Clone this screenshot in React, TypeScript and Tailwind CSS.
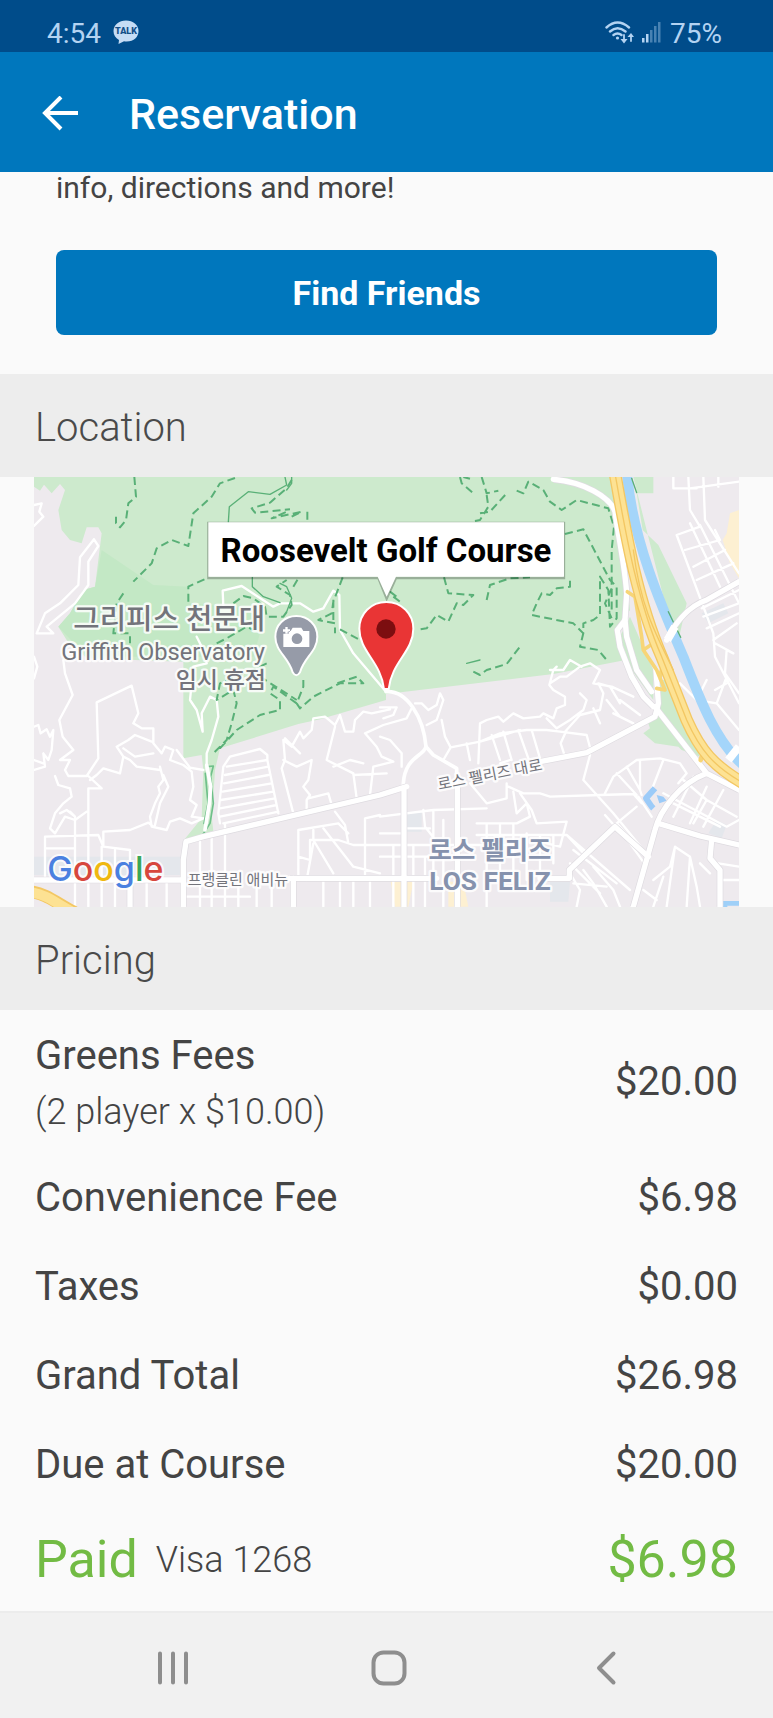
import React from "react";

const PARK =
  "M42 21H1790L1800 120L1830 420L1790 480L1812 580L1805 572L1600 612L1098 672L1098 690L900 748L835 762L600 835L585 900L580 980L575 1040L580 1082L490 1112L545 1045L550 900L545 855L490 865V575L200 565L140 510L115 470L150 430L190 360L225 350L240 230L245 190L235 172H200L185 220L150 210L125 180L115 120L135 60L120 42L95 70L72 44L60 62L42 50Z";

// Residential streets, thin white lines.
const STREETS = [
  // west hills
  "M42 105L65 100L58 125L70 140L42 168",
  "M222 208L180 262L175 345L120 400L75 430L50 490L100 490L80 470L165 400L205 345L205 275L235 228L222 208",
  "M42 560L52 590L42 625M130 570L135 610L158 675L118 750L128 800L160 840L120 870L150 870L135 900L145 918H200L235 865L230 697L335 647L355 730L340 760L365 775H400V820L425 850",
  "M42 770L55 765L62 790L80 778L90 800L100 780L95 840L85 870L70 850L75 890L42 900M42 870L70 880",
  "M205 918L245 955H205V1090M210 930L230 915L250 895L300 910L310 860L290 830L325 810L345 795L395 815M310 835L345 860L400 850M310 860L330 870L350 890L420 900",
  "M425 850L435 830L460 840L450 870L490 885L515 905L520 950L510 990L530 1005L515 1040L550 1045M550 900L510 893L470 840",
  "M420 890L430 930L415 950L420 970L405 1000L390 1040L395 1070L440 1080L450 1055L480 1045L515 1060L550 1045M430 915L445 950L420 1000L405 1065",
  "M105 918L115 945L150 955L155 980L130 1000L105 1030L90 1075L105 1090L135 1040L165 1050L200 1025M120 1030L140 1020L165 1040L150 1025",
  "M75 1230V1100L235 1095L250 1130L330 1140V1230M75 1135H165M165 1045V1310M205 1095V1310M245 1130V1310M285 1140V1310M250 1130V1085L330 1080L385 1058L400 1070",
  // the observatory road
  "M610 410L608 362L665 348L760 410L780 400H840L880 425L910 415L940 362L958 375L960 480L1000 550L1098 665",
  "M530 500L550 540L560 580L520 590L510 690L530 720L548 785L545 730L570 680L590 690L595 740L575 810L560 850L560 900",
  // terraced blocks
  "M600 1060L595 1030L610 890L630 860L720 837L742 855V870L775 1030M742 870L620 890M615 915L745 890M612 940L745 915M608 965L755 940M603 990L760 965M600 1015L765 985M600 1040L770 1005M610 1060L775 1025",
  "M540 1115V1310M575 1105V1310M615 1060V1310M500 1280H690M655 1235V1310M710 1235V1310M755 1235V1310M380 1235V1310M440 1235V1310",
  "M820 1030L785 895L795 870L790 810L815 830L840 785L850 805L875 780L880 745L915 740L945 765L960 735L975 785H1000L1005 750L1030 725L1055 730L1110 718",
  "M790 870L830 890L875 870L865 930L850 950L870 975L860 990V1020M865 985L925 970L935 1005M795 805L840 850",
  "M945 770L920 870L1000 910L1010 985M940 890L990 870L1030 880M1035 790L1070 830L1085 860L1120 875L1060 890L1050 975M1035 790L1090 765L1160 745L1175 715M1000 915L1100 910",
  "M945 1025L975 1065L985 1120M835 1230V1080L955 1060L985 1090M835 1160L870 1170V1110L955 1110L1000 1125H1080M880 1080V1110L940 1210M910 1075L1000 1190L1080 1210M1035 1230V1045L1080 1035M880 1120L860 1230M1000 1235V1310M1050 1235V1310M910 1235V1310M960 1235V1310",
  "M1080 1090H1150M1080 1125H1490M1080 1160H1240M1080 1040L1240 1020L1400 1015M1240 1020V1230M1210 1020L1215 1070L1270 1140M1160 1075H1230M1215 1160V1310M1270 1050V1310M1180 1125V1310M1120 1125V1310",
  // los feliz hills
  "M1080 712H1130L1120 735L1090 745M1185 700L1205 700L1225 720L1250 705L1260 670L1270 690L1250 750L1220 765M1265 750L1275 800L1292 832L1270 870M1292 832L1380 815L1500 780",
  "M1080 800L1110 810L1145 850V890M1375 880L1380 760L1400 750L1435 740L1450 755L1480 730L1510 745L1560 740L1570 730L1600 745L1610 715L1635 705V680L1600 660L1588 645L1600 600L1610 590M1580 745L1610 775L1650 750L1690 720L1700 690L1680 670",
  "M1380 815L1440 790L1520 780H1580L1620 785L1700 795L1712 840L1690 850M1415 795L1440 870M1450 785L1475 870M1495 780L1525 865M1535 780L1560 865M1340 820L1350 870M1440 880L1470 870",
  "M1640 780L1622 820L1635 860L1690 850M1710 855L1690 930L1780 1030L1870 1140M1635 785L1680 735L1740 720L1750 670L1735 640L1770 650L1800 700M1720 715L1740 760M1760 690L1800 740M1800 690L1860 735M1780 730L1840 760",
  "M1590 640L1620 620H1640L1680 590L1710 580L1740 600L1720 640L1775 650L1840 680M1590 600L1630 600L1650 570L1685 590",
  "M1465 950L1510 970H1560L1590 980L1740 975L1840 972L1865 1000M1500 970L1535 1020L1550 1060L1640 1055L1620 1130L1560 1115M1480 965L1490 1030L1520 1000L1530 1040L1490 1060H1400V1310M1350 940L1400 1000L1460 985V940",
  "M1755 970L1780 920L1850 870L1920 865L1980 880L2000 910L1975 940M1860 870V960L1865 975M1820 890L1860 960M1790 910L1850 975M1855 980L1895 1040M1895 960L1930 870M1850 1010L1790 1060",
  "M1370 1060H1490M1370 1095H1640L1700 1160M1480 1060V1230M1440 1060V1230M1520 1090V1230M1560 1095V1200M1600 1095V1180M1640 1095L1830 1260M1660 1140L1790 1240M1650 1180L1740 1270M1755 1035L1830 1120L1880 1190M1790 1060L1870 1150",
  "M1650 1210L1680 1260L1670 1310M1690 1200L1720 1240L1760 1310M1720 1190L1780 1260L1800 1310M1660 1240L1760 1250M1900 1230L1950 1190L1965 1130L2010 1160L2000 1310M1965 1130L1940 1310M1930 1220L1900 1310M2010 1160L2030 1250L2040 1310M2095 1180L2157 1190M2095 1230H2157M2040 1180L2070 1210M1870 1260L1910 1290",
  "M1990 930L2060 990L2150 1040M2020 920L1960 1040M2060 950L2010 1060M2110 960L2050 1070M1960 1000L2100 1070M2060 990L2020 1060M1930 970L2120 1070L2157 1050",
  // north-east grid
  "M1960 21V55H2030M2005 21L2010 120L2040 170L1970 195L2080 490L2085 560L2157 700M2050 21L2055 150L2157 310M2010 55L2157 35M2095 21V50M2040 165L2157 400M2010 160L2100 350M1995 240L2100 210L2085 180M2020 290L2115 240M2030 330L2140 280M2045 415L2157 360M2050 440L2157 400M2060 475L2157 430M2080 510L2150 460M2085 520L2140 550L2120 540L2115 610L2157 670M2085 660L2120 640",
  "M1980 640L2030 690L2090 700L2157 780M2060 630L2030 690M2120 620L2090 700",
].join("");

const ROADS = [
  "M1600 28C1690 36 1770 80 1785 125C1795 200 1815 290 1820 370L1815 450L1792 480L1800 530L1835 620L1870 680L1900 710",
  "M1815 450L1820 500L1850 600L1895 665",
  "M490 1310V1170L498 1115L550 1100L1080 975L1160 950M1560 875L1700 848L1905 740L1915 700L1908 600",
  "M1905 710L1920 730L2060 910L2157 960M2060 910C1980 940 1920 1020 1905 1080L1840 1310M1915 1060L2040 1098L2157 1125M2075 1110L2070 1165L2100 1200V1310",
  "M42 1230H490M810 1225H1250M1560 1225H1648V1200L1785 1070L1885 1160",
  "M1152 960V1310M1312 950V1310M330 1230V1310M820 1225V1310",
  "M1940 510C1960 470 2000 410 2060 390L2157 335",
];
const LESSER = [
  "M1098 665C1160 660 1210 740 1218 830C1210 860 1155 860 1150 940V970",
  "M1218 830L1240 855L1310 895V940",
  "M560 885L572 950L568 1000L555 1080",
];

const TRAILS = [
  "M343 21L348 80L325 100L318 150L300 172L288 160V140",
  "M645 24L600 40L575 80L520 130L505 228L455 210L410 235L395 280L340 335M310 370L290 400L280 490H330V520",
  "M505 395V350L560 325",
  "M815 30L800 55L750 98L695 115L705 128L810 118M815 140L845 125L755 145L800 125M862 125V155",
  "M640 400L670 378L700 385L735 410L740 440L790 440L815 405L810 375L770 350L800 330M820 350L835 325",
  "M968 322L940 395L935 430L895 450L945 460V490M940 450V380M960 478L1020 510",
  "M590 520L620 505L680 470L700 480M740 580L700 600L600 640L590 690L640 660L650 700L635 760L620 810L580 850M600 835L650 780L720 735L780 720L780 690L750 670L760 650L830 700L850 650V620M830 700L840 715L880 680L960 640L1030 640L1010 620L950 640M720 620L830 690",
  "M1320 21L1325 40L1360 70M1385 21L1400 70L1435 62M1400 75L1405 110L1380 150L1355 155M1380 130L1410 125L1460 70",
  "M1330 21L1350 26M1490 62L1510 70L1525 35L1570 60L1590 95L1625 120L1670 90L1765 115L1782 170L1775 240V430",
  "M1635 192L1690 178L1770 330L1790 350V445L1770 470L1765 360L1740 320V435L1720 450L1690 460V490L1680 530L1735 540L1760 570M1775 355L1755 400L1775 445",
  "M1272 322L1285 370L1360 375L1330 405L1310 400L1285 455L1250 435L1220 475L1190 480M1400 390L1410 345L1470 325L1530 322",
  "M1650 332L1650 350L1610 355L1590 375L1565 370L1550 400L1535 435L1660 460L1690 490",
  "M1360 605L1380 615L1400 600L1460 582L1500 530L1495 525M1110 365L1130 380M1120 380L1140 395",
];

function AreaMap() {
  return (
    <svg
      viewBox="42 21 2115 1290"
      className="block w-full"
      role="img"
      aria-label="Map showing Roosevelt Golf Course"
      fontFamily="Roboto, 'Noto Sans CJK KR', sans-serif"
    >
      <rect x="42" y="21" width="2115" height="1290" fill="#eeeaee" />
      <path d={PARK} fill="#cdeacd" />
      <path d="M245 240L400 345L505 350L510 400L740 420L700 560H200L115 470L150 430L190 360L225 350Z" fill="#c3e8c5" />
      <path d="M1840 21H1900V70H1850L1868 180L1915 225L2000 400L1980 490L1960 500ZM1830 440L1900 600V690L1835 600L1800 500Z" fill="#cdeacd" />
      <path d="M1908 630H1945L2040 860L1985 840L1975 830L1905 820L1870 790L1890 775L1880 745L1905 735Z" fill="#cdeacd" />
      <path d="M2157 120L2130 130L2120 190L2108 210L2130 280L2157 325Z" fill="#fdf0d2" />
      <path d="M1112 1235H1180L1165 1310H1125ZM1285 1235H1330L1345 1310H1285Z" fill="#fdf0d2" />
      <path d="M1590 1235H1650L1645 1295H1590ZM1160 1025H1205V1085H1160ZM42 1160H490V1215H42ZM2065 1090L2090 1050L2120 1065L2105 1105ZM2045 430L2110 400L2125 430L2065 460Z" fill="#e4e7ec" />

      <g fill="none" strokeLinejoin="round" strokeLinecap="round">
        <path d={STREETS} stroke="#ffffff" strokeWidth="7" />
        <path d="M2157 1300H2110L2115 1310" stroke="#9fd0f8" strokeWidth="14" />
        <path d="M1822 21C1840 210 1920 400 1990 560C2040 690 2090 820 2175 890" stroke="#a4d5fa" strokeWidth="30" />
        <path d="M1905 955L1878 985L1895 1010L1900 1015" stroke="#9ccbf8" strokeWidth="18" strokeLinecap="butt" />
        <path d="M1918 1000L1910 975L1930 980L1940 992Z" fill="#9ccbf8" />
        <g stroke="#59b077" strokeWidth="6" strokeDasharray="24 13" strokeLinecap="butt">
          {TRAILS.map((d) => (
            <path key={d} d={d} />
          ))}
        </g>
        <path d="M625 157L628 110L685 65L750 73L800 45L795 21M815 21V40L800 60M697 322V350L730 380L780 398M780 340L800 350L815 385L800 425M1835 25L1850 68M1340 580L1380 570M1945 425L1982 502" stroke="#59b077" strokeWidth="4" />
        <path d="M562 890L580 888L572 920L580 1000L570 1060L548 1095M556 910L564 1000L552 1060" stroke="#6fc08a" strokeWidth="5" />
        {LESSER.map((d) => (
          <path key={d} d={d} stroke="#ffffff" strokeWidth="11" />
        ))}
        {ROADS.map((d) => (
          <path key={d} d={d} stroke="#dedbe0" strokeWidth="20" strokeLinecap="butt" />
        ))}
        {ROADS.map((d) => (
          <path key={d} d={d} stroke="#ffffff" strokeWidth="16" />
        ))}
        <path d="M1822 365L1845 380L1865 500L1870 540L1910 600L1935 660L1910 655M1870 540L1900 520L1930 570L1920 625" stroke="#f7d577" strokeWidth="11" />
        <path d="M2042 870L2052 840" stroke="#f7d577" strokeWidth="14" />
        <path d="M1785 10C1820 210 1855 400 1925 560L2000 750C2040 840 2080 890 2180 945" stroke="#f3c763" strokeWidth="38" />
        <path d="M1785 10C1820 210 1855 400 1925 560L2000 750C2040 840 2080 890 2180 945" stroke="#fde293" strokeWidth="30" />
        <path d="M1785 10C1820 210 1855 400 1925 560L2000 750C2040 840 2080 890 2180 945" stroke="#f3c763" strokeWidth="4" />
        <path d="M1840 240C1860 400 1900 480 1960 600" stroke="#f3c763" strokeWidth="4" />
        <path d="M2125 870L2157 830M1942 510L1965 470" stroke="#ffffff" strokeWidth="24" strokeLinecap="butt" />
        <path d="M30 1265C80 1270 110 1300 160 1325" stroke="#f3c763" strokeWidth="38" />
        <path d="M30 1267C80 1272 110 1302 160 1327" stroke="#fde293" strokeWidth="30" />
      </g>

      <g fill="#73747b" stroke="#ffffff" strokeWidth="14" strokeOpacity="0.85" strokeLinejoin="round" paintOrder="stroke">
        <text x="735" y="476" fontSize="86" fontWeight="500" textAnchor="end">그리피스 천문대</text>
        <text x="735" y="570" fontSize="71" textAnchor="end">Griffith Observatory</text>
        <text x="738" y="653" fontSize="69" fontWeight="500" textAnchor="end">임시 휴점</text>
        <text x="503" y="1246" fontSize="45">프랭클린 애비뉴</text>
        <text x="1256" y="960" fontSize="46" transform="rotate(-11 1256 960)">로스 펠리즈 대로</text>
        <text x="1410" y="1168" fontSize="76" fontWeight="700" fill="#8692ad" textAnchor="middle">로스 펠리즈</text>
        <text x="1410" y="1260" fontSize="79" fontWeight="700" fill="#8692ad" textAnchor="middle">LOS FELIZ</text>
      </g>

      <text
        x="82"
        y="1234"
        fontSize="102"
        fontWeight="500"
        fontFamily="Inter, sans-serif"
        stroke="#ffffff"
        strokeWidth="12"
        strokeOpacity="0.8"
        paintOrder="stroke"
      >
        <tspan fill="#4a80e0">G</tspan>
        <tspan fill="#d7473d">o</tspan>
        <tspan fill="#efb810">o</tspan>
        <tspan fill="#4a80e0">g</tspan>
        <tspan fill="#3aa757">l</tspan>
        <tspan fill="#d7473d">e</tspan>
      </text>

      <path d="M829 438C793 438 766 465 766 500C766 545 806 562 818 607Q829 625 840 607C852 562 892 545 892 500C892 465 865 438 829 438Z" fill="#969ba8" stroke="#ffffff" strokeWidth="6" />
      <path d="M790 491V531H868V483H850L844 473H818L812 483H806V491ZM796 471H803V478H810V485H803V492H796V485H789V478H796Z" fill="#ffffff" />
      <circle cx="831" cy="506" r="16" fill="#969ba8" />

      <path d="M565 159H1632V324H1128L1100 386L1075 324H565Z" fill="none" stroke="#000000" strokeOpacity="0.25" strokeWidth="7" />
      <path d="M565 157H1632V320H1128L1100 380L1073 320H565Z" fill="#ffffff" />
      <text x="1098" y="277" fontSize="99" fontWeight="700" textAnchor="middle" fill="#000000">Roosevelt Golf Course</text>

      <path d="M1099 396C1053 396 1018 431 1018 476C1018 545 1083 575 1092 657H1106C1115 575 1180 545 1180 476C1180 431 1145 396 1099 396Z" fill="#e93535" stroke="#ffffff" strokeWidth="6" />
      <circle cx="1098" cy="477" r="29" fill="#7c0e10" />
    </svg>
  );
}

function StatusBar() {
  return (
    <div className="flex h-[52px] items-center justify-between bg-[#004c8a] pt-4 pr-[51px] pl-[47px] text-[28px] leading-9 text-[#b3d3f2]">
      <div className="flex items-center gap-3">
        <span>4:54</span>
        <svg viewBox="0 0 26 24" className="mb-1 h-6 w-[26px]" role="img" aria-label="KakaoTalk">
          <path d="M13 .5C6 .5 .5 5 .5 11C.5 15 2.500 18 6 20L5.500 24L11 21.300C20 22.500 25.500 17.500 25.500 11C25.500 5 20 .5 13 .5Z" fill="#c5dcf5" />
          <text x="13" y="14" textAnchor="middle" fontSize="9" fontWeight="900" fill="#134f88">TALK</text>
        </svg>
      </div>
      <div className="flex items-center gap-2">
        <svg viewBox="0 0 29 23" className="mb-1 h-[23px] w-[29px]" fill="none" stroke="currentColor" strokeWidth="2.400" strokeLinecap="round" aria-hidden="true">
          <path d="M1.500 6.500Q12.500-3.500 24 6.500M5 10.500Q12.500 4 20.500 10.500M8.500 14Q12.500 11 16.500 14" />
          <circle cx="12.500" cy="17" r="1.600" fill="currentColor" stroke="none" />
          <path d="M19 14V19M26 20V15" strokeWidth="1.800" />
          <path d="M15.500 18H22.500L19 22.500ZM22.500 16H29L26 12Z" fill="currentColor" stroke="none" />
        </svg>
        <svg viewBox="0 0 20 22" className="mb-1 h-[22px] w-5" fill="currentColor" aria-hidden="true">
          <rect x="0" y="17" width="2.500" height="4.500" />
          <rect x="4" y="13" width="2.500" height="8.500" />
          <g opacity="0.4">
            <rect x="8" y="9" width="2.500" height="12.500" />
            <rect x="12" y="5" width="2.500" height="16.500" />
            <rect x="16" y="1" width="2.500" height="20.500" />
          </g>
        </svg>
        <span>75%</span>
      </div>
    </div>
  );
}

function SectionTitle({ children }: { children: React.ReactNode }) {
  return (
    <h2 className="flex h-[103px] items-center bg-[#ededed] px-[35px] pt-1 text-[40px] leading-[48px] font-light text-[#4a4a4a]">
      {children}
    </h2>
  );
}

const FEES = [
  { label: "Convenience Fee", amount: "$6.98" },
  { label: "Taxes", amount: "$0.00" },
  { label: "Grand Total", amount: "$26.98" },
  { label: "Due at Course", amount: "$20.00" },
];

export default function App() {
  return (
    <div className="flex min-h-screen flex-col bg-[#fafafa] font-['Roboto','Noto_Sans_CJK_KR',sans-serif] text-[#444444]">
      <StatusBar />
      <header className="flex h-[120px] items-center gap-[50px] bg-[#0077bd] pt-1 pl-[42px] text-white">
        <button type="button" aria-label="Back" className="h-9 w-[37px]">
          <svg viewBox="0 0 37 36" className="h-9 w-[37px]" fill="none" stroke="currentColor" strokeWidth="4">
            <path d="M36 17H4M19 1L3 17L19 33" />
          </svg>
        </button>
        <h1 className="text-[43px] leading-[50px] font-medium">Reservation</h1>
      </header>

      <main className="flex-1">
        <div className="px-14 pb-[39px]">
          <p className="text-[30px] leading-8">info, directions and more!</p>
          <button
            type="button"
            className="mt-[46px] block h-[85px] w-full rounded-lg bg-[#0077bd] text-[34px] leading-10 font-bold text-white"
          >
            Find Friends
          </button>
        </div>

        <SectionTitle>Location</SectionTitle>
        <div className="px-[34px]">
          <AreaMap />
        </div>

        <SectionTitle>Pricing</SectionTitle>
        <table className="w-full text-[40px] leading-[48px]">
          <tbody>
            <tr className="h-[143px]">
              <th scope="row" className="pt-1 pl-[35px] text-left font-normal">
                <span className="block">Greens Fees</span>
                <span className="block pt-2 text-[36px] font-light">(2 player x $10.00)</span>
              </th>
              <td className="pr-[35px] text-right">$20.00</td>
            </tr>
            {FEES.map((fee) => (
              <tr key={fee.label} className="h-[89px]">
                <th scope="row" className="pl-[35px] text-left font-normal">
                  {fee.label}
                </th>
                <td className="pr-[35px] text-right">{fee.amount}</td>
              </tr>
            ))}
            <tr className="h-[102px] text-[52px] leading-[60px] text-[#72bb44]">
              <th scope="row" className="pl-[35px] text-left font-normal">
                <span className="flex items-center gap-[18px]">
                  Paid
                  <span className="text-[36px] font-light text-[#444444]">Visa 1268</span>
                </span>
              </th>
              <td className="pr-[35px] text-right">$6.98</td>
            </tr>
          </tbody>
        </table>
      </main>

      <nav aria-label="System" className="grid h-[108px] grid-cols-3 items-center border-t-2 border-[#ececec] bg-[#f1f1f1] pt-1 pr-[59px] pl-[65px] text-[#8e8e8e]">
        <button type="button" aria-label="Recent apps" className="flex justify-center">
          <svg viewBox="0 0 36 36" className="size-9" stroke="currentColor" strokeWidth="4" strokeLinecap="round">
            <path d="M5 3.500V32.500M18 3.500V32.500M31 3.500V32.500" />
          </svg>
        </button>
        <button type="button" aria-label="Home" className="flex justify-center">
          <svg viewBox="0 0 36 36" className="size-9" fill="none" stroke="currentColor" strokeWidth="4">
            <rect x="2.500" y="2.500" width="31" height="31" rx="10" />
          </svg>
        </button>
        <button type="button" aria-label="Back" className="flex justify-center">
          <svg viewBox="0 0 36 36" className="size-9" fill="none" stroke="currentColor" strokeWidth="4" strokeLinecap="round" strokeLinejoin="round">
            <path d="M25.500 3.500L11 18L25.500 32.500" />
          </svg>
        </button>
      </nav>
    </div>
  );
}
